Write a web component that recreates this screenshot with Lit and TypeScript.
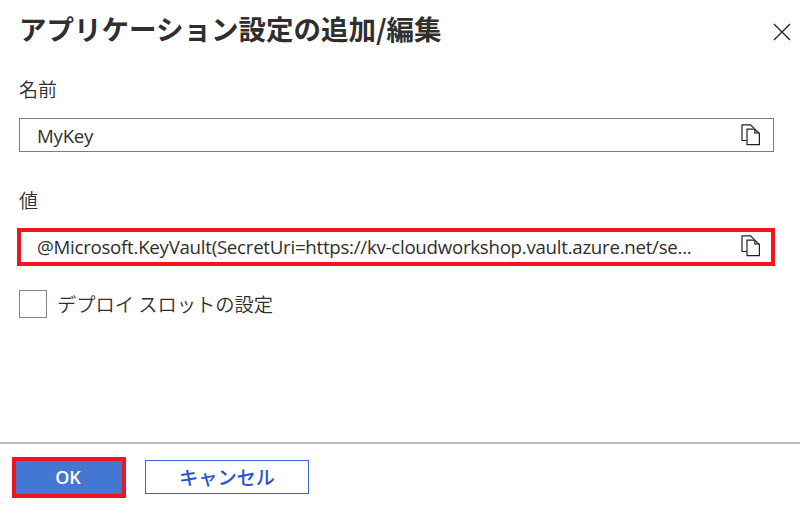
import { LitElement, html, css, svg } from "lit";
import { customElement, property } from "lit/decorators.js";

const copyIcon = html`<svg width="20" height="22" viewBox="0 0 20 22" fill="none" stroke="#222" stroke-width="1.2">
  ${svg`<path d="M5.5 16.5H1V0.9H9.5L13.5 4.6"/><path d="M6 5.2H13.8L18.4 9.4V20.6H6Z"/><path d="M13.8 5.2V8.8H18.4"/>`}
</svg>`;

@customElement("copy-field")
export class CopyField extends LitElement {
  @property() label = "";
  @property() value = "";
  @property({ type: Boolean, reflect: true }) marked = false;

  static styles = css`
    :host { display: block; color: #2f2f2f; }
    .label { height: 26px; line-height: 26px; font-size: 19px; margin-bottom: 16px; font-weight: 350; }
    .box {
      box-sizing: border-box; width: 755px; height: 34px; border: 1px solid #7d7d7d;
      display: flex; align-items: center; justify-content: space-between;
      padding: 0 12px 0 17px; background: #fff;
    }
    .text { font-family: "Open Sans", "Noto Sans", sans-serif; font-size: 18.7px; line-height: 26px; letter-spacing: -0.27px; white-space: nowrap; padding-top: 1px; }
    svg { display: block; flex: none; margin-bottom: 1px; }
    :host([marked]) .box { width: 758px; height: 38px; border: 4px solid #ee1620; margin: -1px 0 -3px -2px; padding: 0 10px 0 16px; }
    :host([marked]) .text { padding-top: 0; }
    :host([marked]) svg { margin-bottom: 3px; }
  `;

  render() {
    return html`<div class="label">${this.label}</div>
      <div class="box"><span class="text">${this.value}</span>${copyIcon}</div>`;
  }
}

@customElement("app-root")
export class AppRoot extends LitElement {
  static styles = css`
    :host {
      display: flex; flex-direction: column; box-sizing: border-box; width: 800px; height: 518px;
      background: #fff; color: #2f2f2f; overflow: hidden;
      font-family: "Noto Sans CJK JP", sans-serif;
    }
    .header { display: flex; justify-content: space-between; height: 76px; padding: 0 9px 0 19px; box-sizing: border-box; }
    .title { margin: 8px 0 0; font-size: 27.5px; line-height: 40px; font-weight: 700; white-space: nowrap; }
    .close { margin-top: 23px; }
    .body { flex: 1; padding-left: 19px; }
    .second { margin-top: 35px; }
    .check { display: flex; align-items: center; gap: 10px; margin-top: 27px; font-size: 19.25px; font-weight: 350; line-height: 28px; white-space: nowrap; }
    .tick { box-sizing: border-box; width: 28px; height: 28px; border: 1px solid #858585; }
    .footer { display: flex; box-sizing: border-box; height: 76px; border-top: 2px solid #bdbdbd; padding: 13px 0 0 12px; gap: 19px; align-items: flex-start; }
    .button { box-sizing: border-box; border: 4px solid #ee1620; padding: 0; width: 114px; height: 41px; font-size: 19.2px; line-height: 30px; font-family: inherit; }
    .ok { background: #4477d2; color: #fff; font-family: "Open Sans", sans-serif; font-weight: 600; font-size: 18px; padding: 0 2px 2px 0; }
    .cancel { margin-top: 3px; width: 164px; height: 34px; border: 1px solid #3b5fd8; background: #fff; color: #2b52d5; font-weight: 500; padding-bottom: 1px; }
  `;

  render() {
    return html`
      <div class="header">
        <h1 class="title">アプリケーション設定の追加/編集</h1>
        <svg class="close" width="18" height="18" viewBox="0 0 18 18" stroke="#222" stroke-width="1.3"><path d="M1 1L17 17M17 1L1 17"/></svg>
      </div>
      <div class="body">
        <copy-field label="名前" value="MyKey"></copy-field>
        <copy-field class="second" label="値" marked value="@Microsoft.KeyVault(SecretUri=https://kv-cloudworkshop.vault.azure.net/se..."></copy-field>
        <div class="check"><span class="tick"></span><span>デプロイ スロットの設定</span></div>
      </div>
      <div class="footer">
        <button class="button ok">OK</button>
        <button class="button cancel">キャンセル</button>
      </div>`;
  }
}
